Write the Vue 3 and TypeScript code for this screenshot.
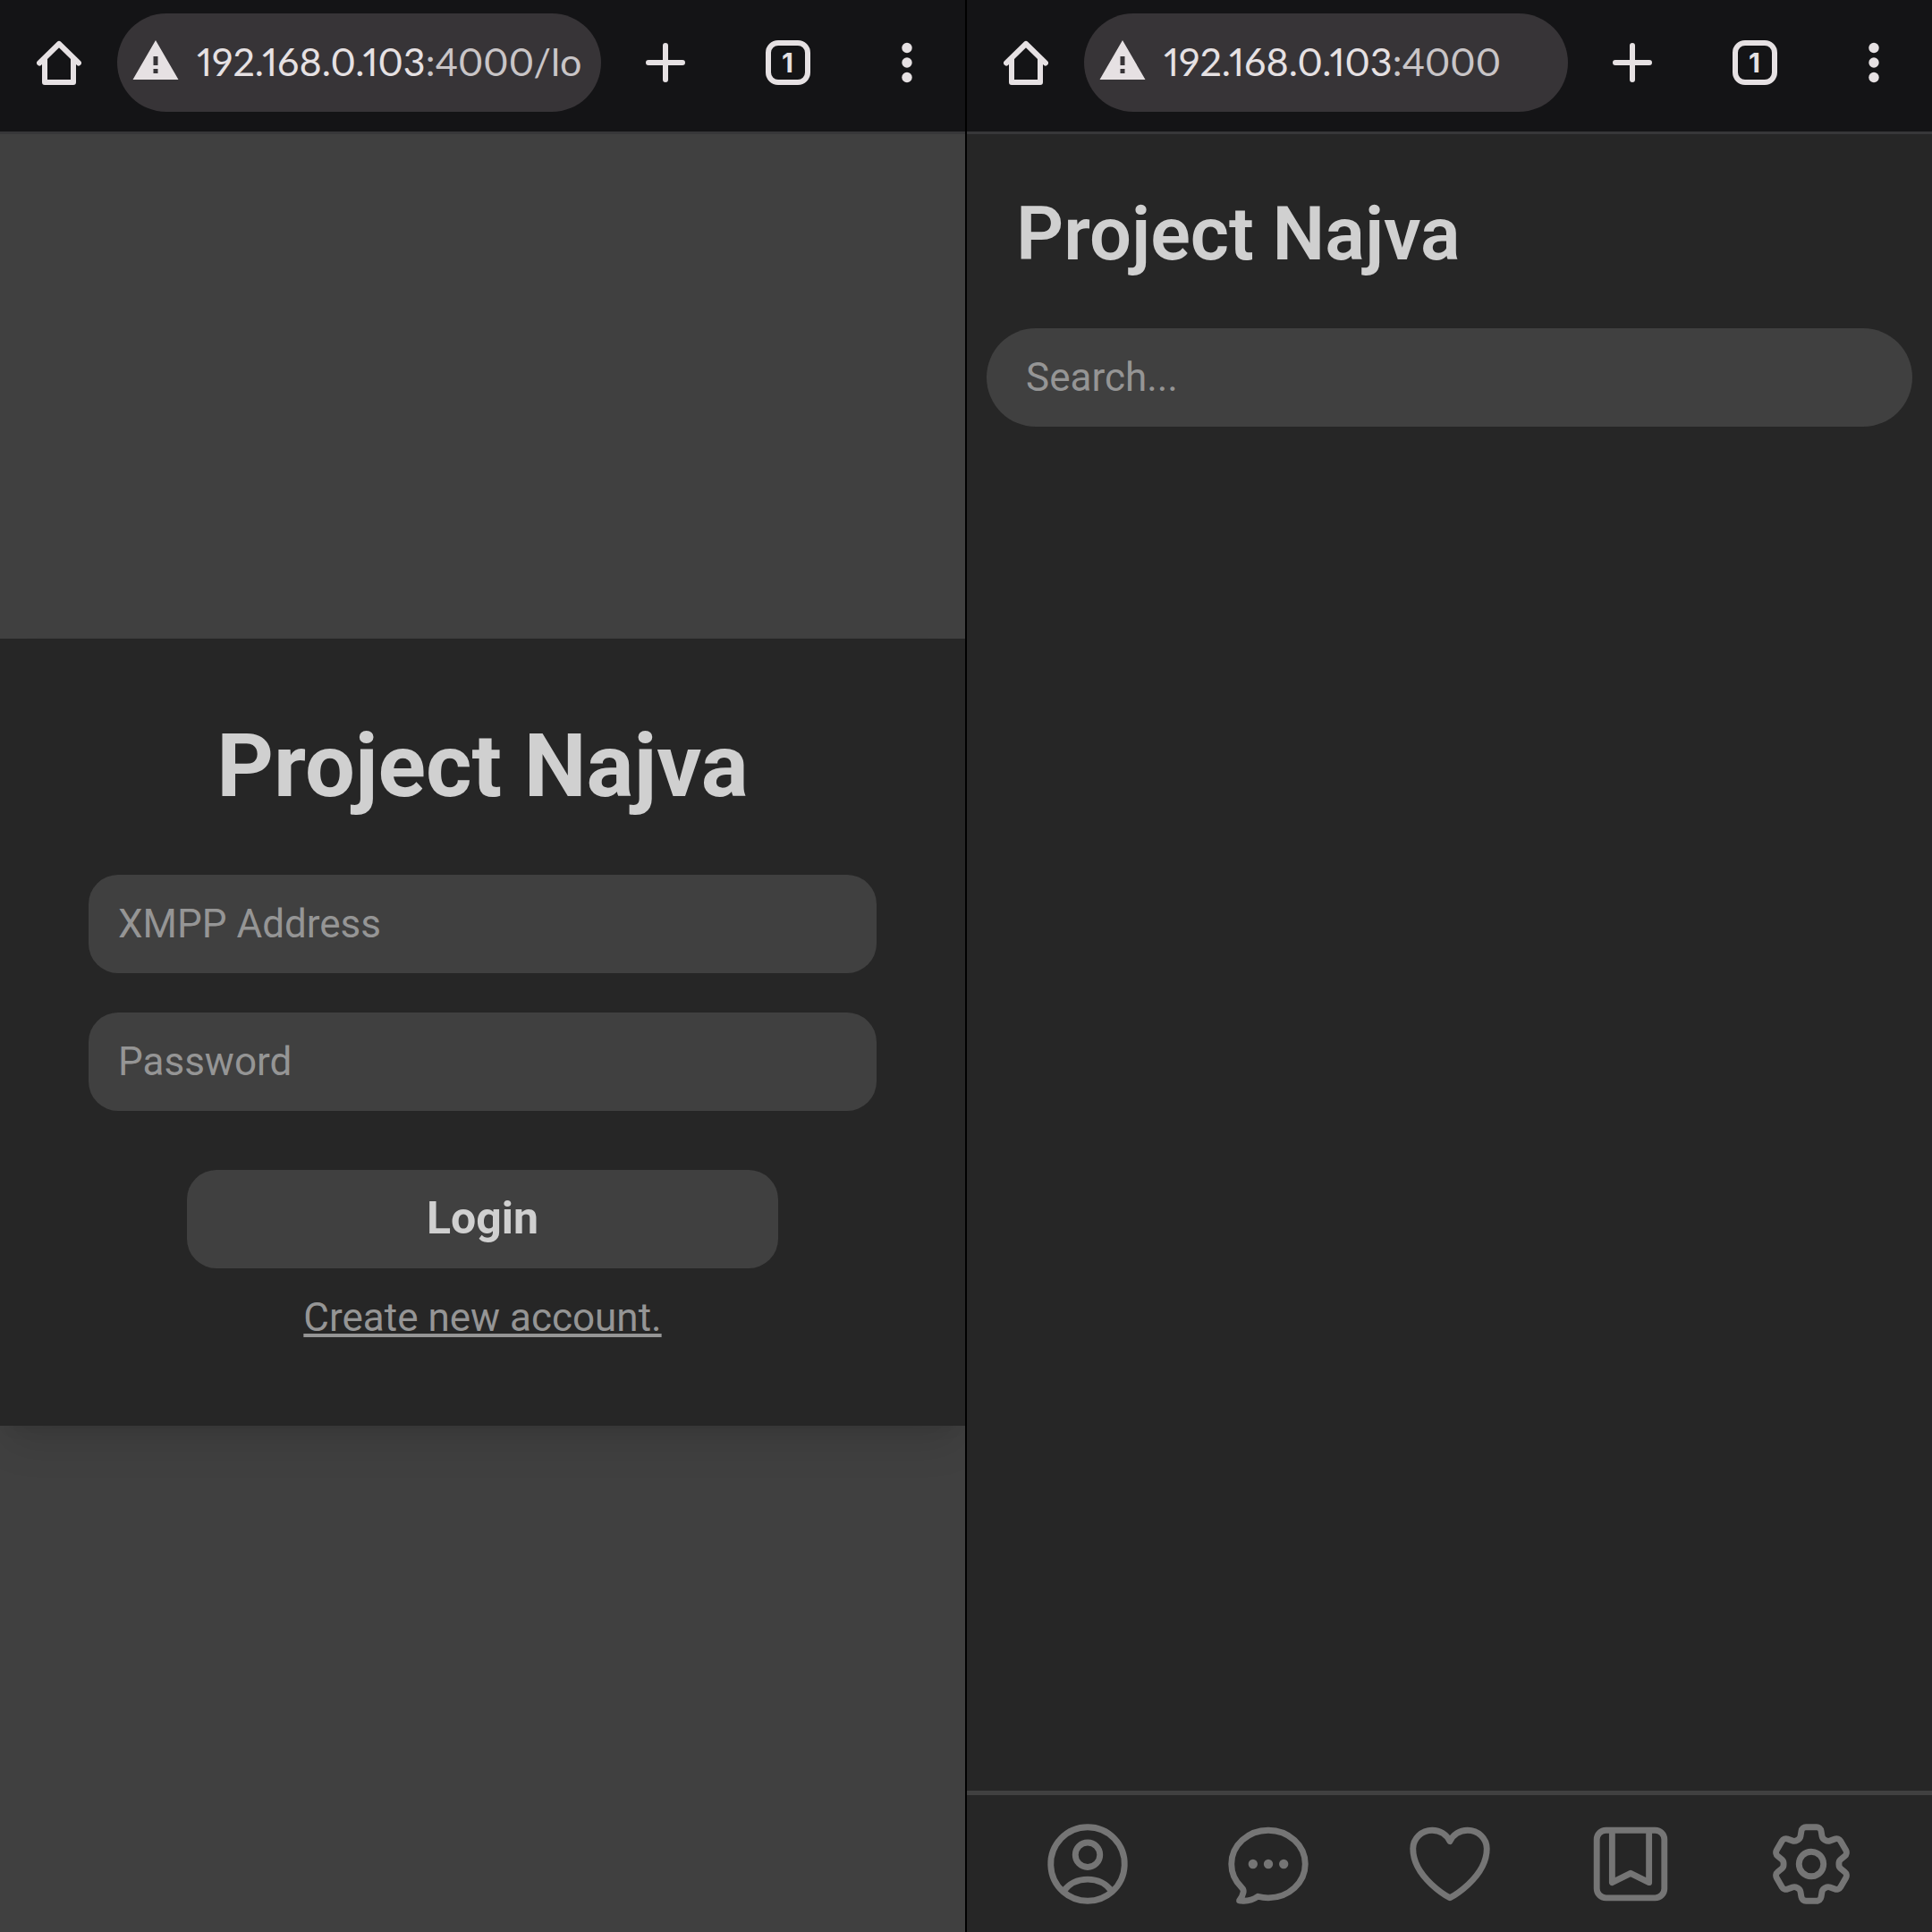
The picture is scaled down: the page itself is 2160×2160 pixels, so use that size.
<script setup lang="ts">
import { ref } from 'vue'

interface Screen {
  id: 'login' | 'home'
  host: string
  path: string
}

interface NavItem {
  label: string
  paths: string[]
}

const screens: Screen[] = [
  { id: 'login', host: '192.168.0.103', path: ':4000/lo' },
  { id: 'home', host: '192.168.0.103', path: ':4000' },
]

const navItems: NavItem[] = [
  {
    label: 'Contacts',
    paths: [
      'M17.982 18.725A7.488 7.488 0 0 0 12 15.75a7.488 7.488 0 0 0-5.982 2.975m11.963 0a9 9 0 1 0-11.963 0m11.963 0A8.966 8.966 0 0 1 12 21a8.966 8.966 0 0 1-5.982-2.275M15 9.75a3 3 0 1 1-6 0 3 3 0 0 1 6 0Z',
    ],
  },
  {
    label: 'Chats',
    paths: [
      'M8.625 12a.375.375 0 1 1-.75 0 .375.375 0 0 1 .75 0Zm0 0H8.25m4.125 0a.375.375 0 1 1-.75 0 .375.375 0 0 1 .75 0Zm0 0H12m4.125 0a.375.375 0 1 1-.75 0 .375.375 0 0 1 .75 0Zm0 0h-.375M21 12c0 4.556-4.03 8.25-9 8.25a9.764 9.764 0 0 1-2.555-.337A5.972 5.972 0 0 1 5.41 20.97a5.969 5.969 0 0 1-.474-.065 4.48 4.48 0 0 0 .978-2.025c.09-.457-.133-.901-.467-1.226C3.93 16.178 3 14.189 3 12c0-4.556 4.03-8.25 9-8.25s9 3.694 9 8.25Z',
    ],
  },
  {
    label: 'Favorites',
    paths: [
      'M21 8.25c0-2.485-2.099-4.5-4.688-4.5-1.935 0-3.597 1.126-4.312 2.733-.715-1.607-2.377-2.733-4.313-2.733C5.1 3.75 3 5.765 3 8.25c0 7.22 9 12 9 12s9-4.78 9-12Z',
    ],
  },
  {
    label: 'Saved',
    paths: [
      'M16.5 3.75V16.5L12 14.25 7.5 16.5V3.75m9 0H18A2.25 2.25 0 0 1 20.25 6v12A2.25 2.25 0 0 1 18 20.25H6A2.25 2.25 0 0 1 3.75 18V6A2.25 2.25 0 0 1 6 3.75h1.5m9 0h-9',
    ],
  },
  {
    label: 'Settings',
    paths: [
      'M9.594 3.94c.09-.542.56-.94 1.11-.94h2.593c.55 0 1.02.398 1.11.94l.213 1.281c.063.374.313.686.645.87.074.04.147.083.22.127.325.196.72.257 1.075.124l1.217-.456a1.125 1.125 0 0 1 1.37.49l1.296 2.247a1.125 1.125 0 0 1-.26 1.431l-1.003.827c-.293.241-.438.613-.43.992a7.723 7.723 0 0 1 0 .255c-.008.378.137.75.43.991l1.004.827c.424.35.534.955.26 1.43l-1.298 2.247a1.125 1.125 0 0 1-1.369.491l-1.217-.456c-.355-.133-.75-.072-1.076.124a6.47 6.47 0 0 1-.22.128c-.331.183-.581.495-.644.869l-.213 1.281c-.09.543-.56.94-1.11.94h-2.594c-.55 0-1.019-.398-1.11-.94l-.213-1.281c-.062-.374-.312-.686-.644-.87a6.52 6.52 0 0 1-.22-.127c-.325-.196-.72-.257-1.076-.124l-1.217.456a1.125 1.125 0 0 1-1.369-.49l-1.297-2.247a1.125 1.125 0 0 1 .26-1.431l1.004-.827c.292-.24.437-.613.43-.991a6.932 6.932 0 0 1 0-.255c.007-.38-.138-.751-.43-.992l-1.004-.827a1.125 1.125 0 0 1-.26-1.43l1.297-2.247a1.125 1.125 0 0 1 1.37-.491l1.216.456c.356.133.751.072 1.076-.124.072-.044.146-.086.22-.128.332-.183.582-.495.644-.869l.214-1.28Z',
      'M15 12a3 3 0 1 1-6 0 3 3 0 0 1 6 0Z',
    ],
  },
]

const address = ref('')
const password = ref('')
const query = ref('')
</script>

<template>
  <div class="screens">
    <section v-for="screen in screens" :key="screen.id" class="screen">
      <header class="toolbar">
        <button type="button" class="tool tool-home" aria-label="Home">
          <svg class="glyph" viewBox="0 0 50 50" fill="none" stroke="currentColor">
            <path d="M3 25.5 25 4l22 21.500M9 21v26h32V21" stroke-width="6" stroke-linecap="round" stroke-linejoin="round" />
          </svg>
        </button>
        <button type="button" class="address">
          <svg class="warning" viewBox="0 0 52 44" fill="currentColor" aria-hidden="true">
            <path fill-rule="evenodd" d="M26 0 51.500 44H.5ZM23.500 18v10h5V18ZM23.500 32v5h5v-5Z" />
          </svg>
          <span class="url">{{ screen.host }}<span class="url-rest">{{ screen.path }}</span></span>
        </button>
        <button type="button" class="tool tool-add" aria-label="New tab">
          <svg class="glyph" viewBox="0 0 50 50" fill="none" stroke="currentColor">
            <path d="M25 6v38M6 25h38" stroke-width="6" stroke-linecap="round" />
          </svg>
        </button>
        <button type="button" class="tool tool-tabs" aria-label="Open tabs">
          <span class="tab-count">1</span>
        </button>
        <button type="button" class="tool tool-menu" aria-label="Menu">
          <svg class="glyph" viewBox="0 0 50 50" fill="currentColor">
            <circle cx="25" cy="8.500" r="5.700" />
            <circle cx="25" cy="25" r="5.700" />
            <circle cx="25" cy="41.500" r="5.700" />
          </svg>
        </button>
      </header>

      <main v-if="screen.id === 'login'" class="login">
        <form class="card" @submit.prevent>
          <h1 class="card-title">Project Najva</h1>
          <div class="fields">
            <input v-model="address" class="field" type="text" placeholder="XMPP Address" aria-label="XMPP Address" />
            <input v-model="password" class="field" type="password" placeholder="Password" aria-label="Password" />
          </div>
          <button type="submit" class="submit">Login</button>
          <a href="#" class="signup">Create new account.</a>
        </form>
      </main>

      <template v-else>
        <main class="home">
          <h1 class="home-title">Project Najva</h1>
          <input v-model="query" class="field search" type="search" placeholder="Search..." aria-label="Search" />
        </main>
        <nav class="bottom-nav">
          <a v-for="item in navItems" :key="item.label" href="#" class="nav-item" :aria-label="item.label">
            <svg class="nav-icon" viewBox="0 0 24 24" fill="none" stroke="currentColor" stroke-width="1.5" stroke-linecap="round" stroke-linejoin="round">
              <path v-for="(d, i) in item.paths" :key="i" :d="d" />
            </svg>
          </a>
        </nav>
      </template>
    </section>
  </div>
</template>

<style>
body {
  margin: 0;
  background: #000;
}
</style>

<style scoped>
.screens {
  display: grid;
  grid-template-columns: 1fr 1fr;
  gap: 2px;
  min-height: 100vh;
  background: #000;
  font-family: Roboto, "Liberation Sans", sans-serif;
}

.screen {
  display: flex;
  flex-direction: column;
  min-width: 0;
  background: #262626;
}

button,
input {
  box-sizing: border-box;
  margin: 0;
  border: 0;
  padding: 0;
  font-family: inherit;
  outline: none;
}

.toolbar {
  position: relative;
  z-index: 1;
  display: flex;
  align-items: center;
  box-sizing: border-box;
  height: 147px;
  padding-bottom: 7px;
  background: #141416;
  box-shadow: 0 3px 0 #373739;
}

.tool {
  display: flex;
  flex: none;
  align-items: center;
  justify-content: center;
  height: 110px;
  background: transparent;
  color: #e6e1e3;
}

.tool-home {
  width: 131px;
}

.tool-add {
  width: 136px;
  margin-left: 4px;
}

.tool-tabs {
  width: 137px;
}

.tool-menu {
  width: 130px;
}

.glyph {
  display: block;
  width: 50px;
  height: 50px;
}

.tab-count {
  box-sizing: border-box;
  width: 50px;
  height: 50px;
  border: 6px solid currentColor;
  border-radius: 14px;
  font-family: Inter, sans-serif;
  font-size: 30px;
  font-weight: 700;
  line-height: 38px;
  text-align: center;
}

.address {
  display: flex;
  flex: 1;
  align-items: center;
  gap: 20px;
  min-width: 0;
  height: 110px;
  padding: 0 22px 0 17px;
  overflow: hidden;
  border-radius: 55px;
  background: #373437;
  color: #e6e1e3;
}

.warning {
  flex: none;
  width: 52px;
  height: 44px;
  margin-bottom: 6px;
}

.url {
  padding-bottom: 2px;
  font-family: Lato, "Open Sans", sans-serif;
  font-size: 43px;
  font-variant-numeric: proportional-nums;
  line-height: 50px;
  white-space: nowrap;
}

.url-rest {
  color: #c9c5c7;
}

.login {
  display: flex;
  flex: 1;
  flex-direction: column;
  justify-content: center;
  background: #404040;
}

.card {
  display: flex;
  flex-direction: column;
  padding: 88px 99px;
  background: #262626;
  box-shadow:
    0 28px 41px -8px rgba(0, 0, 0, 0.1),
    0 11px 17px -11px rgba(0, 0, 0, 0.1);
}

.card-title {
  margin: 0;
  padding-bottom: 2px;
  color: #d0d0d0;
  font-size: 99px;
  font-weight: 700;
  line-height: 108px;
  text-align: center;
}

.fields {
  display: flex;
  flex-direction: column;
  gap: 44px;
  margin: 66px 0;
}

.field {
  width: 100%;
  height: 110px;
  padding: 0 33px;
  border-radius: 33px;
  background: #404040;
  color: #d0d0d0;
  font-size: 44px;
  line-height: 66px;
  appearance: none;
}

.field::placeholder {
  color: #959595;
  opacity: 1;
}

.submit {
  height: 110px;
  margin: 0 110px;
  padding-bottom: 2px;
  border-radius: 33px;
  background: #404040;
  color: #d0d0d0;
  font-size: 50px;
  font-weight: 700;
  line-height: 66px;
}

.signup {
  align-self: center;
  margin-top: 22px;
  color: #959595;
  font-size: 44px;
  line-height: 66px;
  text-decoration: underline;
}

.home {
  display: flex;
  flex: 1;
  flex-direction: column;
  gap: 55px;
  padding: 66px 22px 22px;
}

.home-title {
  margin: 0 33px;
  padding-bottom: 2px;
  color: #d0d0d0;
  font-size: 83px;
  font-weight: 600;
  line-height: 97px;
}

.search {
  padding: 0 44px;
  border-radius: 55px;
}

.bottom-nav {
  display: flex;
  padding: 22px 34px 21px;
  border-top: 5px solid #404040;
}

.nav-item {
  display: flex;
  flex: 1;
  justify-content: center;
  color: #757575;
}

.nav-icon {
  display: block;
  width: 110px;
  height: 110px;
}
</style>
